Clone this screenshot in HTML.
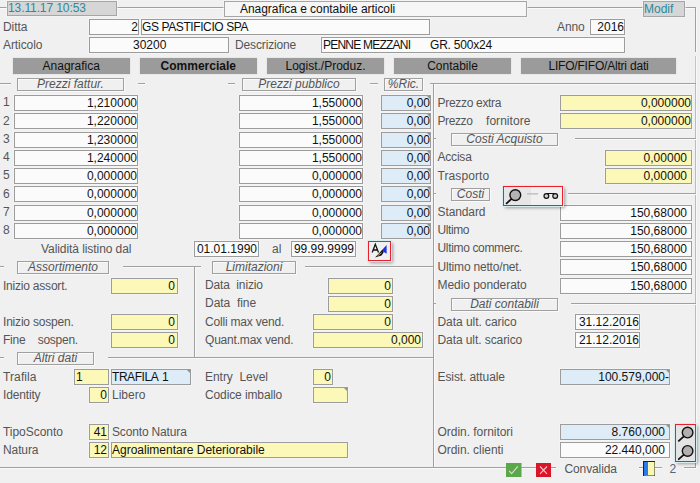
<!DOCTYPE html>
<html><head><meta charset="utf-8"><title>Anagrafica e contabile articoli</title><style>
html,body{margin:0;padding:0;}
body{width:700px;height:483px;background:#f0f0f0;overflow:hidden;position:relative;font-family:"Liberation Sans",sans-serif;font-size:12px;}
.t{position:absolute;height:16px;line-height:16px;white-space:nowrap;letter-spacing:-0.2px;}
.b{position:absolute;box-sizing:border-box;border:1px solid #9c9c9c;white-space:nowrap;overflow:hidden;font-size:12px;box-shadow:0 0 0 0.5px #f8f8f8;}
.h{position:absolute;box-sizing:border-box;border:1px solid #a0a0a0;box-shadow:inset 1px 1px 0 #fafafa, 1px 1px 0 #fafafa;text-align:center;font-style:italic;color:#555;font-size:12px;white-space:nowrap;background:#f0f0f0;}
.hl{position:absolute;height:1px;}
.vl{position:absolute;width:1px;}
.tab{position:absolute;background:#9b9b9b;color:#111;text-align:center;font-size:12px;white-space:nowrap;box-shadow:0 0 0 0.5px #e0e0e0;}
.tri{position:absolute;right:0;top:0;width:0;height:0;border-top:3px solid #909090;border-left:3px solid transparent;}
.rb{position:absolute;z-index:5;box-sizing:border-box;border:1px solid #e8202c;box-shadow:0 0 0 1px #d6ecee, 2px 2px 3px rgba(0,0,0,0.35);background:#f0f0f0;overflow:hidden;}
</style></head><body>
<div class="hl" style="left:0px;top:7.00px;width:7px;background:#a0a0a0;"></div>
<div class="hl" style="left:0px;top:8.00px;width:7px;background:#fafafa;"></div>
<div class="hl" style="left:116px;top:7.00px;width:108px;background:#a0a0a0;"></div>
<div class="hl" style="left:116px;top:8.00px;width:108px;background:#fafafa;"></div>
<div class="hl" style="left:527px;top:7.00px;width:116px;background:#a0a0a0;"></div>
<div class="hl" style="left:527px;top:8.00px;width:116px;background:#fafafa;"></div>
<div class="hl" style="left:685px;top:7.00px;width:10.5px;background:#a0a0a0;"></div>
<div class="hl" style="left:685px;top:8.00px;width:10.5px;background:#fafafa;"></div>
<div class="vl" style="left:695.00px;top:7.5px;height:44.5px;background:#a0a0a0;"></div>
<div class="vl" style="left:696.00px;top:7.5px;height:44.5px;background:#fafafa;"></div>
<div class="b" style="left:7px;top:1px;width:110px;height:15px;background:#d6d6d6;border-color:#a6a6a6;text-align:left;line-height:13px;padding:0 0px;color:#2b8a9b;letter-spacing:-0.1px;">13.11.17 10:53</div>
<div class="b" style="left:224px;top:1px;width:303px;height:16px;background:#f6f6f6;border-color:#a6a6a6;text-align:left;line-height:14px;padding:0 15px;color:#111;letter-spacing:-0.05px;">Anagrafica e contabile articoli</div>
<div class="b" style="left:643px;top:1px;width:42px;height:16px;background:#d6d6d6;border-color:#a6a6a6;text-align:left;line-height:14px;padding:0 0px;color:#2b8a9b;">Modif</div>
<div class="t" style="left:3px;top:18.60px;color:#555555;font-size:12px;letter-spacing:-0.055px;">Ditta</div>
<div class="b" style="left:89px;top:19px;width:50px;height:16px;background:#fbfbfb;border-color:#9c9c9c;text-align:right;line-height:14px;padding:0 0px;color:#111111;">2</div>
<div class="b" style="left:141px;top:19px;width:289px;height:16px;background:#fbfbfb;border-color:#9c9c9c;text-align:left;line-height:14px;padding:0 0px;color:#111111;letter-spacing:-0.4px;">GS PASTIFICIO SPA</div>
<div class="t" style="left:557px;top:18.60px;color:#555555;font-size:12px;letter-spacing:-0.094px;">Anno</div>
<div class="b" style="left:590px;top:19px;width:35px;height:16px;background:#fbfbfb;border-color:#9c9c9c;text-align:right;line-height:14px;padding:0 0px;color:#111111;">2016</div>
<div class="t" style="left:3px;top:36.60px;color:#555555;font-size:12px;letter-spacing:-0.077px;">Articolo</div>
<div class="b" style="left:89px;top:37px;width:140px;height:16px;background:#fbfbfb;border-color:#9c9c9c;text-align:left;line-height:14px;padding:0 43px;color:#111111;">30200</div>
<div class="t" style="left:235px;top:36.60px;color:#555555;font-size:12px;letter-spacing:-0.140px;">Descrizione</div>
<div class="b" style="left:321px;top:37px;width:304px;height:16px;background:#fbfbfb;border-color:#9c9c9c;text-align:left;line-height:14px;padding:0 1px;color:#111111;"><span style="letter-spacing:-0.78px">PENNE MEZZANI</span><span style="position:absolute;left:108px;letter-spacing:-0.2px">GR. 500x24</span></div>
<div class="tab" style="left:12.5px;top:58px;width:117.5px;height:16px;line-height:16px;">Anagrafica</div>
<div class="tab" style="left:140px;top:58px;width:116.5px;height:16px;line-height:16px;font-weight:bold;">Commerciale</div>
<div class="tab" style="left:267px;top:58px;width:117px;height:16px;line-height:16px;">Logist./Produz.</div>
<div class="tab" style="left:394px;top:58px;width:117px;height:16px;line-height:16px;">Contabile</div>
<div class="tab" style="left:521px;top:58px;width:155px;height:16px;line-height:16px;"><span style="letter-spacing:-0.2px">LIFO/FIFO/Altri dati</span></div>
<div class="vl" style="left:695.00px;top:56px;height:27px;background:#c4c4c4;"></div>
<div class="vl" style="left:696.00px;top:56px;height:27px;background:#fafafa;"></div>
<div class="hl" style="left:0px;top:83.00px;width:10.5px;background:#a0a0a0;"></div>
<div class="hl" style="left:0px;top:84.00px;width:10.5px;background:#fafafa;"></div>
<div class="hl" style="left:138px;top:83.00px;width:7px;background:#a0a0a0;"></div>
<div class="hl" style="left:138px;top:84.00px;width:7px;background:#fafafa;"></div>
<div class="h" style="left:17px;top:78px;width:107px;height:13px;line-height:10px;">Prezzi fattur.</div>
<div class="hl" style="left:227.5px;top:83.00px;width:7.5px;background:#a0a0a0;"></div>
<div class="hl" style="left:227.5px;top:84.00px;width:7.5px;background:#fafafa;"></div>
<div class="h" style="left:242px;top:78px;width:114px;height:13px;line-height:10px;">Prezzi pubblico</div>
<div class="hl" style="left:370px;top:83.00px;width:7.5px;background:#a0a0a0;"></div>
<div class="hl" style="left:370px;top:84.00px;width:7.5px;background:#fafafa;"></div>
<div class="h" style="left:384px;top:78px;width:39px;height:13px;line-height:10px;">%Ric.</div>
<div class="hl" style="left:430px;top:83.00px;width:265.5px;background:#a0a0a0;"></div>
<div class="hl" style="left:430px;top:84.00px;width:265.5px;background:#fafafa;"></div>
<div class="vl" style="left:433.00px;top:83.5px;height:383.5px;background:#a0a0a0;"></div>
<div class="vl" style="left:434.00px;top:83.5px;height:383.5px;background:#fafafa;"></div>
<div class="vl" style="left:695.00px;top:83.5px;height:340.5px;background:#bcbcbc;"></div>
<div class="vl" style="left:696.00px;top:83.5px;height:340.5px;background:#fafafa;"></div>
<div class="t" style="left:3px;top:94.35px;color:#555555;font-size:12px;letter-spacing:-0.200px;">1</div>
<div class="b" style="left:14px;top:95px;width:124px;height:16px;background:#fbfbfb;border-color:#9c9c9c;text-align:right;line-height:14px;padding:0 0px;color:#111111;">1,210000</div>
<div class="b" style="left:239px;top:95px;width:124px;height:16px;background:#fbfbfb;border-color:#9c9c9c;text-align:right;line-height:14px;padding:0 0px;color:#111111;">1,550000</div>
<div class="b" style="left:381px;top:95px;width:50px;height:16px;background:#ddecf7;border-color:#9c9c9c;text-align:right;line-height:14px;padding:0 0px;color:#111111;">0,00<i class="tri"></i></div>
<div class="t" style="left:3px;top:112.60px;color:#555555;font-size:12px;letter-spacing:-0.200px;">2</div>
<div class="b" style="left:14px;top:113px;width:124px;height:16px;background:#fbfbfb;border-color:#9c9c9c;text-align:right;line-height:14px;padding:0 0px;color:#111111;">1,220000</div>
<div class="b" style="left:239px;top:113px;width:124px;height:16px;background:#fbfbfb;border-color:#9c9c9c;text-align:right;line-height:14px;padding:0 0px;color:#111111;">1,550000</div>
<div class="b" style="left:381px;top:113px;width:50px;height:16px;background:#ddecf7;border-color:#9c9c9c;text-align:right;line-height:14px;padding:0 0px;color:#111111;">0,00<i class="tri"></i></div>
<div class="t" style="left:3px;top:130.85px;color:#555555;font-size:12px;letter-spacing:-0.200px;">3</div>
<div class="b" style="left:14px;top:132px;width:124px;height:16px;background:#fbfbfb;border-color:#9c9c9c;text-align:right;line-height:14px;padding:0 0px;color:#111111;">1,230000</div>
<div class="b" style="left:239px;top:132px;width:124px;height:16px;background:#fbfbfb;border-color:#9c9c9c;text-align:right;line-height:14px;padding:0 0px;color:#111111;">1,550000</div>
<div class="b" style="left:381px;top:132px;width:50px;height:16px;background:#ddecf7;border-color:#9c9c9c;text-align:right;line-height:14px;padding:0 0px;color:#111111;">0,00<i class="tri"></i></div>
<div class="t" style="left:3px;top:149.10px;color:#555555;font-size:12px;letter-spacing:-0.200px;">4</div>
<div class="b" style="left:14px;top:150px;width:124px;height:16px;background:#fbfbfb;border-color:#9c9c9c;text-align:right;line-height:14px;padding:0 0px;color:#111111;">1,240000</div>
<div class="b" style="left:239px;top:150px;width:124px;height:16px;background:#fbfbfb;border-color:#9c9c9c;text-align:right;line-height:14px;padding:0 0px;color:#111111;">1,550000</div>
<div class="b" style="left:381px;top:150px;width:50px;height:16px;background:#ddecf7;border-color:#9c9c9c;text-align:right;line-height:14px;padding:0 0px;color:#111111;">0,00<i class="tri"></i></div>
<div class="t" style="left:3px;top:167.35px;color:#555555;font-size:12px;letter-spacing:-0.200px;">5</div>
<div class="b" style="left:14px;top:168px;width:124px;height:16px;background:#fbfbfb;border-color:#9c9c9c;text-align:right;line-height:14px;padding:0 0px;color:#111111;">0,000000</div>
<div class="b" style="left:239px;top:168px;width:124px;height:16px;background:#fbfbfb;border-color:#9c9c9c;text-align:right;line-height:14px;padding:0 0px;color:#111111;">0,000000</div>
<div class="b" style="left:381px;top:168px;width:50px;height:16px;background:#ddecf7;border-color:#9c9c9c;text-align:right;line-height:14px;padding:0 0px;color:#111111;">0,00<i class="tri"></i></div>
<div class="t" style="left:3px;top:185.60px;color:#555555;font-size:12px;letter-spacing:-0.200px;">6</div>
<div class="b" style="left:14px;top:186px;width:124px;height:16px;background:#fbfbfb;border-color:#9c9c9c;text-align:right;line-height:14px;padding:0 0px;color:#111111;">0,000000</div>
<div class="b" style="left:239px;top:186px;width:124px;height:16px;background:#fbfbfb;border-color:#9c9c9c;text-align:right;line-height:14px;padding:0 0px;color:#111111;">0,000000</div>
<div class="b" style="left:381px;top:186px;width:50px;height:16px;background:#ddecf7;border-color:#9c9c9c;text-align:right;line-height:14px;padding:0 0px;color:#111111;">0,00<i class="tri"></i></div>
<div class="t" style="left:3px;top:203.85px;color:#555555;font-size:12px;letter-spacing:-0.200px;">7</div>
<div class="b" style="left:14px;top:205px;width:124px;height:16px;background:#fbfbfb;border-color:#9c9c9c;text-align:right;line-height:14px;padding:0 0px;color:#111111;">0,000000</div>
<div class="b" style="left:239px;top:205px;width:124px;height:16px;background:#fbfbfb;border-color:#9c9c9c;text-align:right;line-height:14px;padding:0 0px;color:#111111;">0,000000</div>
<div class="b" style="left:381px;top:205px;width:50px;height:16px;background:#ddecf7;border-color:#9c9c9c;text-align:right;line-height:14px;padding:0 0px;color:#111111;">0,00<i class="tri"></i></div>
<div class="t" style="left:3px;top:222.10px;color:#555555;font-size:12px;letter-spacing:-0.200px;">8</div>
<div class="b" style="left:14px;top:223px;width:124px;height:16px;background:#fbfbfb;border-color:#9c9c9c;text-align:right;line-height:14px;padding:0 0px;color:#111111;">0,000000</div>
<div class="b" style="left:239px;top:223px;width:124px;height:16px;background:#fbfbfb;border-color:#9c9c9c;text-align:right;line-height:14px;padding:0 0px;color:#111111;">0,000000</div>
<div class="b" style="left:381px;top:223px;width:50px;height:16px;background:#ddecf7;border-color:#9c9c9c;text-align:right;line-height:14px;padding:0 0px;color:#111111;">0,00<i class="tri"></i></div>
<div class="t" style="left:41px;top:240.90px;color:#555555;font-size:12px;letter-spacing:-0.071px;">Validità listino dal</div>
<div class="b" style="left:194px;top:241px;width:65px;height:16px;background:#fbfbfb;border-color:#9c9c9c;text-align:right;line-height:14px;padding:0 1px;color:#111111;">01.01.1990</div>
<div class="t" style="left:272px;top:240.90px;color:#555555;font-size:12px;letter-spacing:0.030px;">al</div>
<div class="b" style="left:291px;top:241px;width:65px;height:16px;background:#fbfbfb;border-color:#9c9c9c;text-align:right;line-height:14px;padding:0 1px;color:#111111;">99.99.9999</div>
<div class="rb" style="left:368px;top:241px;width:22.5px;height:19.5px;">
<svg width="22.5" height="19.5" viewBox="368 241 22.5 19.5" style="position:absolute;left:-1px;top:-1px">
<path d="M372.2 252.5 L375.3 244.3 L378.5 252.5 M373.3 250 L377.3 250" stroke="#111" stroke-width="1.3" fill="none"/>
<path d="M386.6 245 L386.6 253.8 L381.6 250.6 Z" fill="#1a34e0"/>
<path d="M375 257.6 L382.3 249.8 L383.6 252.6 L381.5 255.6 Z" fill="#111"/>
<path d="M377.5 255.8 L381.6 252.6" stroke="#e8a23a" stroke-width="1"/>
</svg></div>
<div class="hl" style="left:0px;top:266.00px;width:3.5px;background:#a0a0a0;"></div>
<div class="hl" style="left:0px;top:267.00px;width:3.5px;background:#fafafa;"></div>
<div class="h" style="left:17px;top:261px;width:92px;height:13px;line-height:10px;">Assortimento</div>
<div class="hl" style="left:123px;top:266.00px;width:78px;background:#a0a0a0;"></div>
<div class="hl" style="left:123px;top:267.00px;width:78px;background:#fafafa;"></div>
<div class="vl" style="left:194.00px;top:266.5px;height:90.5px;background:#a0a0a0;"></div>
<div class="vl" style="left:195.00px;top:266.5px;height:90.5px;background:#fafafa;"></div>
<div class="h" style="left:212px;top:261px;width:84px;height:13px;line-height:10px;">Limitazioni</div>
<div class="hl" style="left:305px;top:266.00px;width:128px;background:#a0a0a0;"></div>
<div class="hl" style="left:305px;top:267.00px;width:128px;background:#fafafa;"></div>
<div class="t" style="left:3px;top:277.60px;color:#555555;font-size:12px;letter-spacing:-0.211px;">Inizio assort.</div>
<div class="b" style="left:111px;top:278px;width:67px;height:16px;background:#fbf8b8;border-color:#9c9c9c;text-align:right;line-height:14px;padding:0 2px;color:#111111;">0</div>
<div class="t" style="left:3px;top:313.60px;color:#555555;font-size:12px;letter-spacing:-0.195px;">Inizio sospen.</div>
<div class="b" style="left:111px;top:314px;width:67px;height:16px;background:#fbf8b8;border-color:#9c9c9c;text-align:right;line-height:14px;padding:0 2px;color:#111111;">0</div>
<div class="t" style="left:3px;top:331.60px;color:#555555;font-size:12px;letter-spacing:-0.254px;">Fine&nbsp;&nbsp;&nbsp;&nbsp;sospen.</div>
<div class="b" style="left:111px;top:332px;width:67px;height:16px;background:#fbf8b8;border-color:#9c9c9c;text-align:right;line-height:14px;padding:0 2px;color:#111111;">0</div>
<div class="t" style="left:205px;top:277.10px;color:#555555;font-size:12px;letter-spacing:-0.122px;">Data&nbsp;&nbsp;inizio</div>
<div class="b" style="left:328px;top:278px;width:65px;height:16px;background:#fbf8b8;border-color:#9c9c9c;text-align:right;line-height:14px;padding:0 1px;color:#111111;">0</div>
<div class="t" style="left:205px;top:295.10px;color:#555555;font-size:12px;letter-spacing:-0.021px;">Data&nbsp;&nbsp;fine</div>
<div class="b" style="left:328px;top:296px;width:65px;height:16px;background:#fbf8b8;border-color:#9c9c9c;text-align:right;line-height:14px;padding:0 1px;color:#111111;">0</div>
<div class="t" style="left:205px;top:313.60px;color:#555555;font-size:12px;letter-spacing:-0.192px;">Colli max vend.</div>
<div class="b" style="left:313px;top:314px;width:80px;height:16px;background:#fbf8b8;border-color:#9c9c9c;text-align:right;line-height:14px;padding:0 1px;color:#111111;">0</div>
<div class="t" style="left:205px;top:331.60px;color:#555555;font-size:12px;letter-spacing:-0.199px;">Quant.max vend.</div>
<div class="b" style="left:313px;top:332px;width:110px;height:16px;background:#fbf8b8;border-color:#9c9c9c;text-align:right;line-height:14px;padding:0 1px;color:#111111;">0,000</div>
<div class="hl" style="left:0px;top:357.00px;width:3.5px;background:#a0a0a0;"></div>
<div class="hl" style="left:0px;top:358.00px;width:3.5px;background:#fafafa;"></div>
<div class="h" style="left:17px;top:352px;width:77px;height:13px;line-height:10px;">Altri dati</div>
<div class="hl" style="left:108px;top:357.00px;width:325px;background:#a0a0a0;"></div>
<div class="hl" style="left:108px;top:358.00px;width:325px;background:#fafafa;"></div>
<div class="t" style="left:3px;top:368.60px;color:#555555;font-size:12px;letter-spacing:0.108px;">Trafila</div>
<div class="b" style="left:74px;top:369px;width:35px;height:16px;background:#fbf8b8;border-color:#9c9c9c;text-align:left;line-height:14px;padding:0 1px;color:#111111;">1</div>
<div class="b" style="left:111px;top:369px;width:80px;height:16px;background:#ddecf7;border-color:#9c9c9c;text-align:left;line-height:14px;padding:0 0px;color:#111111;letter-spacing:-0.45px;word-spacing:1.5px;">TRAFILA 1<i class="tri"></i></div>
<div class="t" style="left:205px;top:368.60px;color:#555555;font-size:12px;letter-spacing:-0.039px;">Entry&nbsp;&nbsp;Level</div>
<div class="b" style="left:313px;top:369px;width:20px;height:16px;background:#fbf8b8;border-color:#9c9c9c;text-align:right;line-height:14px;padding:0 1px;color:#111111;">0</div>
<div class="t" style="left:3px;top:386.60px;color:#555555;font-size:12px;letter-spacing:-0.161px;">Identity</div>
<div class="b" style="left:89px;top:387px;width:20px;height:16px;background:#fbf8b8;border-color:#9c9c9c;text-align:right;line-height:14px;padding:0 1px;color:#111111;">0</div>
<div class="t" style="left:112px;top:386.60px;color:#555555;font-size:12px;letter-spacing:0.007px;">Libero</div>
<div class="t" style="left:205px;top:386.60px;color:#555555;font-size:12px;letter-spacing:-0.111px;">Codice imballo</div>
<div class="b" style="left:313px;top:387px;width:35px;height:16px;background:#fbf8b8;border-color:#9c9c9c;text-align:right;line-height:14px;padding:0 1px;color:#111111;"><i class="tri"></i></div>
<div class="t" style="left:3px;top:423.60px;color:#555555;font-size:12px;letter-spacing:-0.036px;">TipoSconto</div>
<div class="b" style="left:89px;top:424px;width:20px;height:16px;background:#fbf8b8;border-color:#9c9c9c;text-align:right;line-height:14px;padding:0 1px;color:#111111;">41</div>
<div class="t" style="left:112px;top:423.60px;color:#555555;font-size:12px;letter-spacing:-0.159px;">Sconto Natura</div>
<div class="t" style="left:3px;top:441.60px;color:#555555;font-size:12px;letter-spacing:-0.103px;">Natura</div>
<div class="b" style="left:89px;top:442px;width:20px;height:16px;background:#fbf8b8;border-color:#9c9c9c;text-align:right;line-height:14px;padding:0 1px;color:#111111;">12</div>
<div class="b" style="left:111px;top:442px;width:237px;height:16px;background:#fbf8b8;border-color:#9c9c9c;text-align:left;line-height:14px;padding:0 0px;color:#111111;">Agroalimentare Deteriorabile</div>
<div class="t" style="left:437.5px;top:94.50px;color:#555555;font-size:12px;letter-spacing:-0.309px;">Prezzo extra</div>
<div class="b" style="left:560px;top:95px;width:132px;height:16px;background:#fbf8b8;border-color:#9c9c9c;text-align:right;line-height:14px;padding:0 0px;color:#111111;">0,000000</div>
<div class="t" style="left:437.5px;top:112.60px;color:#555555;font-size:12px;letter-spacing:-0.408px;">Prezzo</div>
<div class="t" style="left:486px;top:112.60px;color:#555555;font-size:12px;letter-spacing:0.042px;">fornitore</div>
<div class="b" style="left:560px;top:113px;width:132px;height:16px;background:#fbf8b8;border-color:#9c9c9c;text-align:right;line-height:14px;padding:0 0px;color:#111111;">0,000000</div>
<div class="hl" style="left:433.5px;top:138.00px;width:2.5px;background:#a0a0a0;"></div>
<div class="hl" style="left:433.5px;top:139.00px;width:2.5px;background:#fafafa;"></div>
<div class="h" style="left:451px;top:133px;width:107px;height:13px;line-height:10px;">Costi Acquisto</div>
<div class="hl" style="left:575px;top:138.00px;width:120.5px;background:#a0a0a0;"></div>
<div class="hl" style="left:575px;top:139.00px;width:120.5px;background:#fafafa;"></div>
<div class="t" style="left:437.5px;top:149.10px;color:#555555;font-size:12px;letter-spacing:-0.199px;">Accisa</div>
<div class="b" style="left:605px;top:150px;width:87px;height:16px;background:#fbf8b8;border-color:#9c9c9c;text-align:right;line-height:14px;padding:0 4px;color:#111111;">0,00000</div>
<div class="t" style="left:437.5px;top:167.70px;color:#555555;font-size:12px;letter-spacing:0.083px;">Trasporto</div>
<div class="b" style="left:605px;top:168px;width:87px;height:16px;background:#fbf8b8;border-color:#9c9c9c;text-align:right;line-height:14px;padding:0 4px;color:#111111;">0,00000</div>
<div class="hl" style="left:433.5px;top:193.00px;width:2.5px;background:#a0a0a0;"></div>
<div class="hl" style="left:433.5px;top:194.00px;width:2.5px;background:#fafafa;"></div>
<div class="h" style="left:451px;top:188px;width:39px;height:13px;line-height:10px;">Costi</div>
<div class="hl" style="left:568px;top:193.00px;width:127.5px;background:#a0a0a0;"></div>
<div class="hl" style="left:568px;top:194.00px;width:127.5px;background:#fafafa;"></div>
<div class="rb" style="left:503px;top:185.5px;width:59.5px;height:20px;">
<svg width="59.5" height="20" viewBox="503 185.5 59.5 20" style="position:absolute;left:-1px;top:-1px">
<rect x="503" y="185.5" width="28" height="20" fill="#e6e6e6"/>
<circle cx="515.3" cy="194.6" r="5.4" fill="#b4b4b4" stroke="#111" stroke-width="1.4"/>
<path d="M511.3 198.6 L506.6 202.8" stroke="#111" stroke-width="1.8" stroke-linecap="round"/>
<path d="M527 193.4 L538 193.4" stroke="#a8a8a8" stroke-width="1"/>
<circle cx="546.4" cy="195.5" r="2.4" fill="#d0d0d0" stroke="#111" stroke-width="1.2"/>
<circle cx="555.2" cy="195.5" r="2.4" fill="#d0d0d0" stroke="#111" stroke-width="1.2"/>
<path d="M547 193 L555 193" stroke="#111" stroke-width="1"/>
</svg></div>
<div class="t" style="left:437.5px;top:203.85px;color:#555555;font-size:12px;letter-spacing:-0.100px;">Standard</div>
<div class="b" style="left:560px;top:205px;width:132px;height:16px;background:#fbfbfb;border-color:#9c9c9c;text-align:right;line-height:14px;padding:0 4px;color:#111111;">150,68000</div>
<div class="t" style="left:437.5px;top:222.10px;color:#555555;font-size:12px;letter-spacing:-0.392px;">Ultimo</div>
<div class="b" style="left:560px;top:223px;width:132px;height:16px;background:#fbfbfb;border-color:#9c9c9c;text-align:right;line-height:14px;padding:0 4px;color:#111111;">150,68000</div>
<div class="t" style="left:437.5px;top:240.35px;color:#555555;font-size:12px;letter-spacing:-0.340px;">Ultimo commerc.</div>
<div class="b" style="left:560px;top:241px;width:132px;height:16px;background:#fbfbfb;border-color:#9c9c9c;text-align:right;line-height:14px;padding:0 4px;color:#111111;">150,68000</div>
<div class="t" style="left:437.5px;top:258.60px;color:#555555;font-size:12px;letter-spacing:-0.190px;">Ultimo netto/net.</div>
<div class="b" style="left:560px;top:259px;width:132px;height:16px;background:#fbfbfb;border-color:#9c9c9c;text-align:right;line-height:14px;padding:0 4px;color:#111111;">150,68000</div>
<div class="t" style="left:437.5px;top:276.85px;color:#555555;font-size:12px;letter-spacing:-0.061px;">Medio ponderato</div>
<div class="b" style="left:560px;top:278px;width:132px;height:16px;background:#fbfbfb;border-color:#9c9c9c;text-align:right;line-height:14px;padding:0 4px;color:#111111;">150,68000</div>
<div class="hl" style="left:433.5px;top:303.00px;width:2.5px;background:#a0a0a0;"></div>
<div class="hl" style="left:433.5px;top:304.00px;width:2.5px;background:#fafafa;"></div>
<div class="h" style="left:451px;top:298px;width:107px;height:13px;line-height:10px;">Dati contabili</div>
<div class="hl" style="left:571px;top:303.00px;width:124.5px;background:#a0a0a0;"></div>
<div class="hl" style="left:571px;top:304.00px;width:124.5px;background:#fafafa;"></div>
<div class="t" style="left:437.5px;top:314.10px;color:#555555;font-size:12px;letter-spacing:-0.055px;">Data ult. carico</div>
<div class="b" style="left:575px;top:314px;width:65px;height:16px;background:#fbfbfb;border-color:#9c9c9c;text-align:right;line-height:14px;padding:0 0px;color:#111111;">31.12.2016</div>
<div class="t" style="left:437.5px;top:332.40px;color:#555555;font-size:12px;letter-spacing:-0.081px;">Data ult. scarico</div>
<div class="b" style="left:575px;top:332px;width:65px;height:16px;background:#fbfbfb;border-color:#9c9c9c;text-align:right;line-height:14px;padding:0 0px;color:#111111;">21.12.2016</div>
<div class="t" style="left:437.5px;top:368.90px;color:#555555;font-size:12px;letter-spacing:-0.093px;">Esist. attuale</div>
<div class="b" style="left:560px;top:369px;width:110px;height:16px;background:#ddecf7;border-color:#9c9c9c;text-align:right;line-height:14px;padding:0 0px;color:#111111;">100.579,000-<i class="tri"></i></div>
<div class="t" style="left:437.5px;top:423.50px;color:#555555;font-size:12px;letter-spacing:-0.039px;">Ordin. fornitori</div>
<div class="b" style="left:560px;top:424px;width:110px;height:16px;background:#ddecf7;border-color:#9c9c9c;text-align:right;line-height:14px;padding:0 4px;color:#111111;">8.760,000<i class="tri"></i></div>
<div class="t" style="left:437.5px;top:442.00px;color:#555555;font-size:12px;letter-spacing:-0.057px;">Ordin. clienti</div>
<div class="b" style="left:560px;top:442px;width:110px;height:16px;background:#fbfbfb;border-color:#9c9c9c;text-align:right;line-height:14px;padding:0 4px;color:#111111;">22.440,000</div>
<div class="rb" style="left:675px;top:424px;width:21px;height:38px;">
<svg width="20.5" height="37" viewBox="675 424 20.5 37" style="position:absolute;left:-1px;top:-1px">
<rect x="675" y="424" width="20.5" height="37" fill="#e4e4e4"/>
<circle cx="687.6" cy="432.6" r="5.3" fill="#b0b0b0" stroke="#111" stroke-width="1.4"/>
<path d="M683.6 436.6 L678.8 440.9" stroke="#111" stroke-width="1.8" stroke-linecap="round"/>
<circle cx="687.6" cy="450.9" r="5.3" fill="#b0b0b0" stroke="#111" stroke-width="1.4"/>
<path d="M683.6 454.9 L678.8 459.2" stroke="#111" stroke-width="1.8" stroke-linecap="round"/>
</svg></div>
<div class="hl" style="left:0px;top:467.00px;width:506px;background:#a0a0a0;"></div>
<div class="hl" style="left:0px;top:468.00px;width:506px;background:#fafafa;"></div>
<div class="hl" style="left:521px;top:467.00px;width:15px;background:#a0a0a0;"></div>
<div class="hl" style="left:521px;top:468.00px;width:15px;background:#fafafa;"></div>
<div class="hl" style="left:551px;top:467.00px;width:5px;background:#a0a0a0;"></div>
<div class="hl" style="left:551px;top:468.00px;width:5px;background:#fafafa;"></div>
<div class="hl" style="left:639px;top:467.00px;width:23px;background:#a0a0a0;"></div>
<div class="hl" style="left:639px;top:468.00px;width:23px;background:#fafafa;"></div>
<div class="hl" style="left:684px;top:467.00px;width:11.5px;background:#a0a0a0;"></div>
<div class="hl" style="left:684px;top:468.00px;width:11.5px;background:#fafafa;"></div>
<div class="vl" style="left:695.00px;top:461.5px;height:6.0px;background:#a0a0a0;"></div>
<div class="vl" style="left:696.00px;top:461.5px;height:6.0px;background:#fafafa;"></div>
<svg style="position:absolute;left:506px;top:463px" width="15.5" height="14" viewBox="0 0 15.5 14"><rect width="15.5" height="14" fill="#5ca64c"/><path d="M3.2 7.8 L5.6 10.6 L11.8 3.4" stroke="#cfe6c8" stroke-width="1.1" fill="none"/></svg>
<svg style="position:absolute;left:536px;top:463px" width="15" height="14" viewBox="0 0 15 14"><rect width="15" height="14" fill="#d9152a"/><path d="M4 3.5 L11 10.8 M11 3.5 L4 10.8" stroke="#f4c8cc" stroke-width="1.1" fill="none"/></svg>
<div class="t" style="left:564.5px;top:460.60px;color:#555555;font-size:12px;letter-spacing:-0.119px;">Convalida</div>
<svg style="position:absolute;left:642.5px;top:460.5px" width="12.5" height="15.5" viewBox="0 0 12.5 15.5"><rect x="0.5" y="0.5" width="11.5" height="14.5" fill="#fbf6b0" stroke="#222" stroke-width="1"/><rect x="1" y="1" width="4" height="13.5" fill="#2a7be8"/></svg>
<div class="t" style="left:669.5px;top:460.60px;color:#5c6378;font-size:12px;letter-spacing:-0.200px;">2</div>
</body></html>
